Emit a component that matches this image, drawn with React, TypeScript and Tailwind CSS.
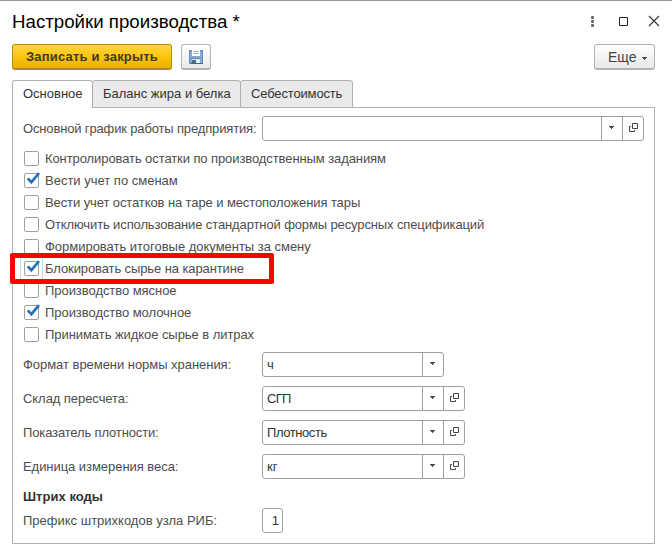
import type { ReactNode } from "react";

const checks: { label: string; on?: boolean; focus?: boolean; track: string }[] = [
  { label: "Контролировать остатки по производственным заданиям", track: "tracking-[-0.09px]" },
  { label: "Вести учет по сменам", on: true, track: "tracking-normal" },
  { label: "Вести учет остатков на таре и местоположения тары", track: "tracking-[-0.1px]" },
  { label: "Отключить использование стандартной формы ресурсных спецификаций", track: "tracking-[-0.12px]" },
  { label: "Формировать итоговые документы за смену", track: "tracking-[-0.02px]" },
  { label: "Блокировать сырье на карантине", on: true, focus: true, track: "tracking-[-0.1px]" },
  { label: "Производство мясное", track: "tracking-[-0.05px]" },
  { label: "Производство молочное", on: true, track: "tracking-[-0.05px]" },
  { label: "Принимать жидкое сырье в литрах", track: "tracking-[-0.06px]" },
];

function Arrow() {
  return (
    <svg width="5" height="3" viewBox="0 0 5 3" className="block">
      <path d="M0 0H5V1H4V2H3V3H2V2H1V1H0Z" fill="#4d4d4d" />
    </svg>
  );
}

function OpenIcon() {
  return (
    <svg width="9" height="9" viewBox="0 0 9 9" className="block" fill="none" stroke="#444">
      <path d="M3.5 .5H8.5V5.5H3.5ZM2 3.5H.5V8.5H5.5V7" />
    </svg>
  );
}

function Combo({ value, open, width, track = "" }: { value?: string; open?: boolean; width: string; track?: string }) {
  return (
    <div className={"flex h-[25px] rounded-[3px] border border-[#a0a0a0] bg-white text-[#333] " + width}>
      <div className={"flex-1 pl-[4px] leading-[24px] " + track}>{value}</div>
      <div className="w-[21px] border-l border-[#a0a0a0] pt-[9px] pl-[7px]">
        <Arrow />
      </div>
      {open && (
        <div className="w-[21px] border-l border-[#a0a0a0] pt-[6px] pl-[6px]">
          <OpenIcon />
        </div>
      )}
    </div>
  );
}

function Field({ label, track, children }: { label: string; track: string; children: ReactNode }) {
  return (
    <div className="flex h-[25px]">
      <div className={"w-[239px] shrink-0 leading-[25px] " + track}>{label}</div>
      {children}
    </div>
  );
}

export default function App() {
  return (
    <div className="h-[554px] w-[672px] overflow-hidden border-t border-[#999] bg-white font-['Liberation_Sans',Arial,sans-serif] text-[13px] whitespace-nowrap text-[#4d4d4d]">
      <header className="flex h-[43px] items-start justify-between pr-[12px] pl-[12px]">
        <h1 className="pt-[9px] text-[18.7px] leading-[24px] text-black">Настройки производства *</h1>
        <svg width="70" height="13" viewBox="0 0 70 13" className="mt-[14px] block" fill="none">
          <g fill="#666">
            <rect x="1" y="1" width="3" height="3" rx="1" />
            <rect x="1" y="5" width="3" height="3" rx="1" />
            <rect x="1" y="9" width="3" height="3" rx="1" />
          </g>
          <path d="M29.5 2.5H37.5V10.5H29.5Z" stroke="#222" />
          <path d="M59 1L69 11M69 1L59 11" stroke="#333" strokeWidth="1.1" />
        </svg>
      </header>
      <div className="flex h-[36px] items-start pr-[17px] pl-[12px]">
        <button className="h-[26px] w-[160px] rounded-[3px] border border-b-2 border-[#b38d0c] bg-linear-to-b from-[#ffd43b] via-[#fbc60c] to-[#e9b000] pt-px font-bold tracking-[0.17px] text-[#423a28]">
          Записать и закрыть
        </button>
        <button className="ml-[9px] h-[26px] w-[30px] rounded-[3px] border border-b-2 border-[#b3b3b3] bg-linear-to-b from-white to-[#ebebeb] pl-[7px]">
          <svg width="14" height="14" viewBox="0 0 14 14" className="block">
            <path d="M0 0H14V14H1L0 13Z" fill="#5d8cc0" />
            <path d="M1 1H13V13H1Z" fill="#83abd6" />
            <path d="M3 0H11V6H3Z" fill="#fff" />
            <path d="M4 1.5H10M4 3.5H10" stroke="#9db4cc" />
            <path d="M2 8H12V9H2Z" fill="#5d87b5" />
            <path d="M3 9H11V13H3Z" fill="#dfe6ec" />
            <path d="M3 10H7V13H3Z" fill="#4a6b8c" />
            <path d="M8 10H10V13H8Z" fill="#fff" />
            <path d="M1 13H14V14H1Z" fill="#3f6896" />
          </svg>
        </button>
        <button className="ml-auto flex h-[26px] w-[61px] items-center rounded-[3px] border border-b-2 border-[#b3b3b3] bg-linear-to-b from-white to-[#e8e8e8] pt-px pl-[13px] text-[14px] text-[#444]">
          <span className="w-[34px] text-left">Еще</span>
          <span className="mt-[2px]"><Arrow /></span>
        </button>
      </div>
      <nav className="relative z-10 ml-[12px] flex h-[28px] text-[#333]">
        <div className="h-[28px] w-[81px] rounded-t-[3px] border border-b-0 border-[#b0b0b0] bg-white pl-[10px] leading-[26px]">Основное</div>
        <div className="-ml-px h-[28px] w-[149px] rounded-t-[3px] border border-[#b0b0b0] bg-[#eaeaea] pl-[10px] leading-[26px]">Баланс жира и белка</div>
        <div className="-ml-px h-[28px] w-[113px] rounded-t-[3px] border border-[#b0b0b0] bg-[#eaeaea] pl-[10px] leading-[26px] tracking-[-0.15px]">Себестоимость</div>
      </nav>
      <main className="relative -mt-px ml-[12px] h-[437px] w-[643px] border border-[#b0b0b0] pt-[8px] pl-[10px]">
        <Field label="Основной график работы предприятия:" track="tracking-[-0.15px]">
          <Combo open width="w-[382px]" />
        </Field>
        <div className="pt-[7px]">
          {checks.map((c) => (
            <label key={c.label} className="flex h-[22px] items-start">
              <span
                className={
                  "-ml-[3px] flex h-[22px] w-[23px] shrink-0 border-x pt-[3px] pl-[3px] " +
                  (c.focus ? "border-[#b8dcf5]" : "border-transparent")
                }
              >
                <span className="h-[15px] w-[15px] rounded-[2px] border border-[#a0a0a0] bg-white">
                  {c.on && (
                    <svg width="15" height="14" viewBox="0 0 15 14" className="-mt-[2px] block max-w-none overflow-visible">
                      <path d="M2.8 6.3L6.4 10.2L14 1.2" fill="none" stroke="#2672bd" strokeWidth="2.7" />
                    </svg>
                  )}
                </span>
              </span>
              <span className={"pl-[2px] leading-[22px] " + c.track}>{c.label}</span>
            </label>
          ))}
        </div>
        <div className="flex flex-col gap-[9px] pt-[6px]">
          <Field label="Формат времени нормы хранения:" track="tracking-[-0.04px]">
            <Combo value="ч" width="w-[182px]" />
          </Field>
          <Field label="Склад пересчета:" track="tracking-[-0.06px]">
            <Combo value="СГП" open width="w-[203px]" track="tracking-[-0.7px]" />
          </Field>
          <Field label="Показатель плотности:" track="tracking-[-0.14px]">
            <Combo value="Плотность" open width="w-[203px]" track="tracking-[-0.42px]" />
          </Field>
          <Field label="Единица измерения веса:" track="tracking-[-0.05px]">
            <Combo value="кг" open width="w-[203px]" />
          </Field>
        </div>
        <h2 className="h-[29px] pt-[7px] leading-[22px] font-bold tracking-[0.03px] text-[#333]">Штрих коды</h2>
        <Field label="Префикс штрихкодов узла РИБ:" track="tracking-normal">
          <div className="w-[21px] rounded-[3px] border border-[#a0a0a0] pr-[3px] text-right leading-[24px] text-[#333]">1</div>
        </Field>
        <div className="absolute top-[145px] -left-[3px] h-[31px] w-[264px] rounded-[2px] border-5 border-[#fe0000]" />
      </main>
    </div>
  );
}
